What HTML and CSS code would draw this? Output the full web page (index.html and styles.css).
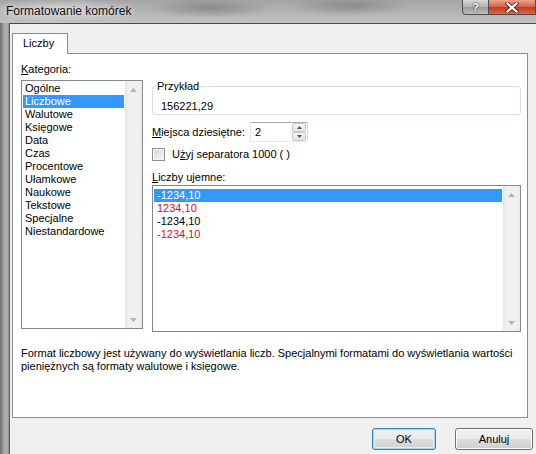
FILE: index.html
```html
<!DOCTYPE html>
<html lang="pl">
<head>
<meta charset="utf-8">
<title>Formatowanie komórek</title>
<link rel="stylesheet" href="styles.css">
</head>
<body>
<div class="window">
  <div class="titlebar">
    <span class="title">Formatowanie komórek</span>
    <div class="caption">
      <span class="cb help">?</span>
      <span class="cb close">
        <svg width="14" height="11" viewBox="0 0 14 11"><path d="M2.5 1.5 L11.5 9.5 M11.5 1.5 L2.5 9.5" stroke="#7a1e0c" stroke-width="4" stroke-linecap="square"/><path d="M2.5 1.5 L11.5 9.5 M11.5 1.5 L2.5 9.5" stroke="#ffffff" stroke-width="2.2" stroke-linecap="square"/></svg>
      </span>
    </div>
  </div>
  <div class="client">
    <div class="tabs"><span class="tab">Liczby</span></div>
    <div class="panel">
      <div class="cols">
        <div class="cat-label"><u>K</u>ategoria:</div>
        <div class="listbox cat-list">
          <ul class="items">
            <li>Ogólne</li>
            <li class="sel">Liczbowe</li>
            <li>Walutowe</li>
            <li>Księgowe</li>
            <li>Data</li>
            <li>Czas</li>
            <li>Procentowe</li>
            <li>Ułamkowe</li>
            <li>Naukowe</li>
            <li>Tekstowe</li>
            <li>Specjalne</li>
            <li>Niestandardowe</li>
          </ul>
          <div class="scrollbar">
            <span class="sarrow"><svg width="7" height="4" viewBox="0 0 7 4"><path d="M0 4 L3.5 0 L7 4 Z" fill="#b4b4b4"/></svg></span>
            <span class="sarrow"><svg width="7" height="4" viewBox="0 0 7 4"><path d="M0 0 L7 0 L3.5 4 Z" fill="#b4b4b4"/></svg></span>
          </div>
        </div>
        <div class="right">
          <fieldset class="sample">
            <legend>Przykład</legend>
            <div class="sample-value">156221,29</div>
          </fieldset>
          <div class="decimals">
            <span class="dec-label"><u>M</u>iejsca dziesiętne:</span>
            <div class="spin">
              <span class="spin-val">2</span>
              <div class="spin-btns">
                <span class="sbtn"><svg width="5" height="3" viewBox="0 0 5 3"><path d="M0 3 L2.5 0 L5 3 Z" fill="#555"/></svg></span>
                <span class="sbtn"><svg width="5" height="3" viewBox="0 0 5 3"><path d="M0 0 L5 0 L2.5 3 Z" fill="#555"/></svg></span>
              </div>
            </div>
          </div>
          <div class="check-row">
            <span class="checkbox"></span>
            <span>U<u>ż</u>yj separatora 1000 ( )</span>
          </div>
          <div class="neg-label"><u>L</u>iczby ujemne:</div>
          <div class="listbox neg-list">
            <ul class="items">
              <li class="sel">-1234,10</li>
              <li class="red">1234,10</li>
              <li>-1234,10</li>
              <li class="red">-1234,10</li>
            </ul>
            <div class="scrollbar">
              <span class="sarrow"><svg width="7" height="4" viewBox="0 0 7 4"><path d="M0 4 L3.5 0 L7 4 Z" fill="#b4b4b4"/></svg></span>
              <span class="sarrow"><svg width="7" height="4" viewBox="0 0 7 4"><path d="M0 0 L7 0 L3.5 4 Z" fill="#b4b4b4"/></svg></span>
            </div>
          </div>
        </div>
      </div>
      <p class="desc">Format liczbowy jest używany do wyświetlania liczb. Specjalnymi formatami do wyświetlania wartości pieniężnych są formaty walutowe i księgowe.</p>
    </div>
    <div class="buttons">
      <button class="btn default">OK</button>
      <button class="btn">Anuluj</button>
    </div>
  </div>
</div>
</body>
</html>
```

FILE: styles.css
```css
* { box-sizing: border-box; }
html, body { margin: 0; padding: 0; }
body {
  width: 536px;
  height: 454px;
  overflow: hidden;
  font-family: "Liberation Sans", Arial, sans-serif;
  font-size: 11px;
  line-height: 13px;
  color: #000;
}
.window {
  display: flex;
  flex-direction: column;
  height: 454px;
  background: linear-gradient(to right, #6c6c6c 0px, #878787 2px, #a6a6a6 4px, #b2b2b2 7px, #8c8c8c 9px);
}
.titlebar {
  height: 23px;
  display: flex;
  align-items: flex-start;
  background:
    radial-gradient(ellipse 60px 10px at 210px 8px, rgba(110,110,110,.55), rgba(110,110,110,0)),
    radial-gradient(ellipse 60px 10px at 350px 6px, rgba(110,110,110,.5), rgba(110,110,110,0)),
    radial-gradient(ellipse 80px 12px at 60px 10px, rgba(225,225,225,.7), rgba(225,225,225,0)),
    linear-gradient(#a4a4a4, #c2c2c2);
}
.title {
  padding: 4px 0 0 6px;
  font-size: 12px;
  line-height: 14px;
  color: #111;
  text-shadow: 0 0 6px rgba(255,255,255,.9);
}
.caption {
  margin-left: auto;
  display: flex;
}
.cb {
  height: 15px;
  display: flex;
  align-items: center;
  justify-content: center;
  border: 1px solid #4d4d4d;
  border-top: none;
}
.help {
  width: 27px;
  border-radius: 0 0 0 4px;
  background: linear-gradient(#dadada, #b4b4b4 50%, #9a9a9a 51%, #bdbdbd);
  color: #fff;
  font-weight: bold;
  font-size: 11px;
  text-shadow: 0 0 2px #333, 0 0 1px #333;
}
.close {
  width: 47px;
  border-left: none;
  background: linear-gradient(#e9a391, #d56a51 45%, #c63a1a 52%, #d9694a);
}
.client {
  flex: 1;
  margin-left: 9px;
  border-left: 1px solid #595959;
  border-top: 1px solid #4a4a4a;
  background: #f0f0f0;
  padding: 9px 0 0 2px;
}
.tabs { display: flex; }
.tab {
  width: 56px;
  height: 21px;
  border: 1px solid #898c95;
  border-bottom: none;
  background: #fff;
  padding: 3px 0 0 10px;
  margin-bottom: -1px;
  position: relative;
  z-index: 1;
}
.panel {
  width: 516px;
  height: 365px;
  border: 1px solid #898c95;
  background: #fff;
  padding: 9px 6px 0 8px;
}
.cols {
  display: grid;
  grid-template-columns: 122px 369px;
  column-gap: 9px;
  align-items: start;
}
.cat-label {
  grid-column: 1;
  grid-row: 1;
  margin-bottom: 4px;
}
.cat-list {
  grid-column: 1;
  grid-row: 2;
  height: 249px;
}
.right {
  grid-column: 2;
  grid-row: 2;
  display: flex;
  flex-direction: column;
}
.listbox {
  display: flex;
  border: 1px solid #828790;
  background: #fff;
}
.items {
  list-style: none;
  margin: 0;
  padding: 1px 1px 0 1px;
  flex: 1;
}
.items li {
  height: 13px;
  padding-left: 2px;
  white-space: nowrap;
}
.items li.sel {
  background: #3399ff;
  color: #fff;
}
.items li.red { color: #e01010; }
.neg-list .items { padding: 3px 1px 0 1px; }
.neg-list .items li { padding-left: 3px; }
.scrollbar {
  width: 17px;
  display: flex;
  flex-direction: column;
  justify-content: space-between;
  background: linear-gradient(to right, #e6e6e6, #f1f1f1 25%, #f1f1f1 75%, #e9e9e9);
}
.sarrow {
  height: 17px;
  display: flex;
  align-items: center;
  justify-content: center;
}
.sample {
  margin: 0;
  padding: 7px 0 1px 3px;
  border: 1px solid #d5dfe5;
  border-radius: 3px;
  min-width: 0;
}
.sample legend {
  padding: 0 1px;
  color: #000;
}
.sample-value { margin-left: 5px; }
.decimals {
  margin-top: 7px;
  display: flex;
  align-items: center;
}
.dec-label { width: 98px; }
.spin {
  width: 58px;
  height: 20px;
  display: flex;
  border: 1px solid #abadb3;
  border-color: #abadb3 #dbdfe6 #e3e9ef #e2e3ea;
  background: #fff;
}
.spin-val {
  flex: 1;
  padding: 3px 0 0 4px;
}
.spin-btns {
  width: 15px;
  display: flex;
  flex-direction: column;
  padding: 0 1px 0 0;
}
.sbtn {
  flex: 1;
  display: flex;
  align-items: center;
  justify-content: center;
  border: 1px solid #c8c8c8;
  border-radius: 2px;
  background: linear-gradient(#f6f6f6, #e4e4e4);
}
.check-row {
  margin-top: 6px;
  display: flex;
  align-items: center;
  gap: 7px;
}
.checkbox {
  width: 13px;
  height: 13px;
  border: 1px solid #8e8f8f;
  background: linear-gradient(135deg, #d9d9d9, #f7f7f7);
  box-shadow: inset 0 0 0 1px #f4f4f4;
}
.neg-label { margin-top: 10px; }
.neg-list {
  margin-top: 1px;
  height: 147px;
}
.desc {
  margin: 15px 0 0 0;
}
.buttons {
  display: flex;
  justify-content: flex-end;
  gap: 19px;
  margin-top: 10px;
  padding-right: 3px;
}
.btn {
  height: 22px;
  font-family: inherit;
  font-size: 11px;
  line-height: 13px;
  color: #000;
  padding: 0;
  border: 1px solid #707070;
  border-radius: 3px;
  background: linear-gradient(#f2f2f2, #ebebeb 50%, #dddddd 51%, #cfcfcf);
  box-shadow: inset 0 0 0 1px #fbfbfb;
}
.btn.default {
  width: 64px;
  border-color: #3c7fb1;
  box-shadow: inset 0 0 0 1px #a8d8f0, inset 0 0 0 2px #dff1fb;
}
.btn:not(.default) { width: 78px; }
```
